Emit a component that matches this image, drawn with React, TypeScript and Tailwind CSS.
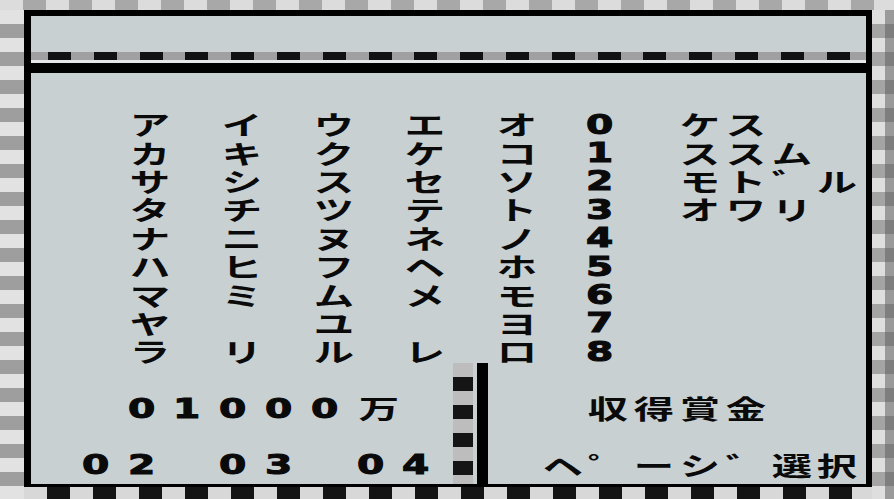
import React from 'react';

// name-entry style screen: kana grid, menu, prize money and page select
const KANA_COLS = [
  ['ア', 'カ', 'サ', 'タ', 'ナ', 'ハ', 'マ', 'ヤ', 'ラ'],
  ['イ', 'キ', 'シ', 'チ', 'ニ', 'ヒ', 'ミ', '', 'リ'],
  ['ウ', 'ク', 'ス', 'ツ', 'ヌ', 'フ', 'ム', 'ユ', 'ル'],
  ['エ', 'ケ', 'セ', 'テ', 'ネ', 'ヘ', 'メ', '', 'レ'],
  ['オ', 'コ', 'ソ', 'ト', 'ノ', 'ホ', 'モ', 'ヨ', 'ロ'],
  ['0', '1', '2', '3', '4', '5', '6', '7', '8'],
];

const MENU = [
  ['ケ', 'ス'],
  ['ス', 'ス', 'ム'],
  ['モ', 'ト', '゛', 'ル'],
  ['オ', 'ワ', 'リ'],
];

function Tile({ ch }: { ch: string }) {
  const digit = /[0-9]/.test(ch);
  if (digit) {
    return (
      <div className="w-[45.8px] h-[28.4px] shrink-0 flex items-center justify-start">
        <span className="inline-block origin-left scale-x-[1.45] font-['DejaVu_Sans',sans-serif] font-bold text-[27px] leading-none text-[#0a0a0a] [-webkit-text-stroke:1px_#0a0a0a]">
          {ch}
        </span>
      </div>
    );
  }
  return (
    <div className="w-[45.8px] h-[28.4px] shrink-0 flex items-center justify-center">
      <span className="inline-block scale-x-[1.55] font-['Noto_Sans_CJK_JP',sans-serif] font-bold text-[26px] leading-none text-[#0a0a0a]">
        {ch}
      </span>
    </div>
  );
}

function Row({ chars, className = '' }: { chars: string[]; className?: string }) {
  return (
    <div className={`flex h-[28.4px] ${className}`}>
      {chars.map((c, i) => (
        <Tile key={i} ch={c} />
      ))}
    </div>
  );
}

export default function App() {
  return (
    <div className="w-[894px] h-[499px] flex flex-col overflow-hidden bg-[#c9d0d2]">
      <div className="h-[10px] shrink-0 bg-[repeating-linear-gradient(90deg,#dcdcdc_0_23px,#a8a8a8_23px_46px)]" />
      <div className="flex flex-1 min-h-0">
        <div className="w-[24px] shrink-0 bg-[repeating-linear-gradient(180deg,#e2e2e2_0_14px,#9e9e9e_14px_28px)]" />

        <div className="flex-1 flex flex-col min-w-0">
          <div className="flex-1 flex flex-col border-l-[7px] border-r-[6px] border-t-[6px] border-black min-h-0">
            {/* top panel */}
            <div className="h-[36px] shrink-0 bg-[#c9d0d2]" />
            <div className="h-[8px] shrink-0 bg-[repeating-linear-gradient(90deg,#a0a0a0_0_17px,#111_17px_40px,#a0a0a0_40px_45.8px)]" />
            <div className="h-[3px] shrink-0 bg-[#e4e8e8]" />
            <div className="h-[10px] shrink-0 bg-black" />

            {/* main */}
            <div className="flex-1 flex flex-col pt-[37px] pl-[5px] min-h-0">
              <div className="flex pl-[91.6px] gap-[45.8px] h-[255.6px] shrink-0">
                {KANA_COLS.map((col, i) => (
                  <div key={i} className="flex flex-col">
                    {col.map((c, j) => (
                      <Tile key={j} ch={c} />
                    ))}
                  </div>
                ))}
                <div className="flex flex-col">
                  {MENU.map((r, i) => (
                    <Row key={i} chars={r} />
                  ))}
                </div>
              </div>

              <div className="flex flex-1">
                <div className="w-[412.2px] shrink-0 flex flex-col">
                  <div className="h-[28.4px]" />
                  <Row chars={['0', '1', '0', '0', '0', '万']} className="pl-[91.6px]" />
                  <div className="h-[28.4px]" />
                  <Row chars={['0', '2', '', '0', '3', '', '0', '4']} className="pl-[45.8px]" />
                </div>

                <div className="w-[45.8px] shrink-0 flex -mt-[3px] pl-[4.4px] gap-[4px]">
                  <div className="w-[20px] bg-[repeating-linear-gradient(180deg,#bdbdbd_0_14px,#151515_14px_28px)]" />
                  <div className="w-[11px] bg-black" />
                </div>

                <div className="flex-1 flex flex-col">
                  <div className="h-[28.4px]" />
                  <Row chars={['収', '得', '賞', '金']} className="pl-[91.6px]" />
                  <div className="h-[28.4px]" />
                  <Row chars={['ヘ', '゜', 'ー', 'シ', '゛', '選', '択']} className="pl-[45.8px]" />
                </div>
              </div>
            </div>
          </div>
          <div className="h-[3px] shrink-0 bg-black" />
          <div className="h-[12px] shrink-0 bg-[repeating-linear-gradient(90deg,#d8d8d8_0_23px,#141414_23px_46px)]" />
        </div>

        <div className="w-[22px] shrink-0 flex">
          <div className="w-[13px] bg-[repeating-linear-gradient(180deg,#dedede_0_14px,#a4a4a4_14px_28px)]" />
          <div className="w-[9px] bg-[repeating-linear-gradient(180deg,#9a9a9a_0_14px,#7e7e7e_14px_28px)]" />
        </div>
      </div>
    </div>
  );
}
